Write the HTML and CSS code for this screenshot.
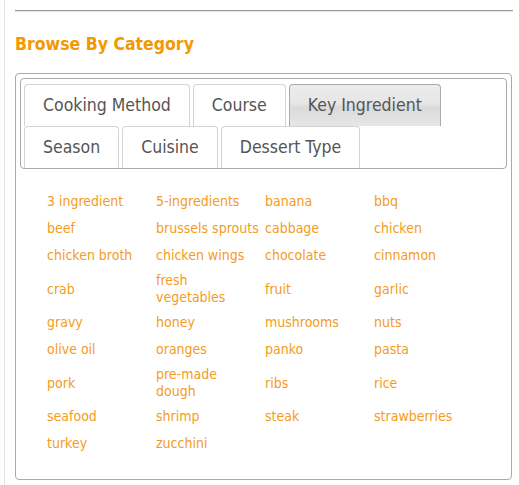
FILE: index.html
```html
<!DOCTYPE html>
<html>
<head>
<meta charset="utf-8">
<link rel="stylesheet" href="styles.css">
</head>
<body>
<div class="page">
  <hr class="rule">
  <h2 class="title">Browse By Category</h2>
  <div class="box">
    <div class="nav">
      <div class="tabrow">
        <a class="tab">Cooking Method</a>
        <a class="tab">Course</a>
        <a class="tab active">Key Ingredient</a>
      </div>
      <div class="tabrow">
        <a class="tab">Season</a>
        <a class="tab">Cuisine</a>
        <a class="tab">Dessert Type</a>
      </div>
    </div>
    <ul class="links">
      <li><a>3 ingredient</a></li>
      <li><a>5-ingredients</a></li>
      <li><a>banana</a></li>
      <li><a>bbq</a></li>
      <li><a>beef</a></li>
      <li><a>brussels sprouts</a></li>
      <li><a>cabbage</a></li>
      <li><a>chicken</a></li>
      <li><a>chicken broth</a></li>
      <li><a>chicken wings</a></li>
      <li><a>chocolate</a></li>
      <li><a>cinnamon</a></li>
      <li><a>crab</a></li>
      <li><a>fresh vegetables</a></li>
      <li><a>fruit</a></li>
      <li><a>garlic</a></li>
      <li><a>gravy</a></li>
      <li><a>honey</a></li>
      <li><a>mushrooms</a></li>
      <li><a>nuts</a></li>
      <li><a>olive oil</a></li>
      <li><a>oranges</a></li>
      <li><a>panko</a></li>
      <li><a>pasta</a></li>
      <li><a>pork</a></li>
      <li><a>pre-made dough</a></li>
      <li><a>ribs</a></li>
      <li><a>rice</a></li>
      <li><a>seafood</a></li>
      <li><a>shrimp</a></li>
      <li><a>steak</a></li>
      <li><a>strawberries</a></li>
      <li><a>turkey</a></li>
      <li><a>zucchini</a></li>
    </ul>
  </div>
</div>
</body>
</html>
```
FILE: styles.css
```css
html, body {
  margin: 0;
  padding: 0;
  background: #fff;
}
body {
  font-family: "DejaVu Sans Condensed", "DejaVu Sans", sans-serif;
  font-stretch: condensed;
}
.page {
  margin-left: 4px;
  border-left: 1px solid #e8e4dc;
  padding: 10px 6px 0 10px;
  min-height: 485px;
  box-sizing: border-box;
}
.rule {
  margin: 0;
  height: 0;
  border: 0;
  border-top: 1px solid #999;
  border-bottom: 1px solid #e4e4e4;
}
.title {
  margin: 22px 0 19px 0;
  font-size: 17.5px;
  line-height: 20px;
  font-weight: bold;
  color: #f39800;
}
.box {
  border: 1px solid #aaa;
  border-radius: 4px;
  padding: 4px;
  height: 397px;
  width: 487px;
}
.nav {
  border: 1px solid #aaa;
  border-radius: 4px;
  padding: 5px 3px 0 3px;
  display: flex;
  flex-direction: column;
}
.tabrow {
  display: flex;
}
.tab {
  height: 41px;
  line-height: 41px;
  padding: 0 18px;
  border: 1px solid #d3d3d3;
  border-bottom: 0;
  border-radius: 4px 4px 0 0;
  margin-right: 3px;
  background: #fff;
  color: #555;
  font-size: 17.5px;
  white-space: nowrap;
}
.tab.active {
  border-color: #aaa;
  background: linear-gradient(#ececec 0%, #e6e6e6 45%, #dadada 55%, #e6e6e6 100%);
}
.links {
  list-style: none;
  margin: 19px 0 0 27px;
  padding: 0;
  display: grid;
  grid-template-columns: repeat(4, 109px);
}
.links li {
  min-height: 27px;
  padding: 3px 5.5px 3px 0;
  box-sizing: border-box;
  display: flex;
  align-items: center;
  line-height: 17px;
  font-size: 14px;
}
.links a {
  color: #f49c22;
}
```
